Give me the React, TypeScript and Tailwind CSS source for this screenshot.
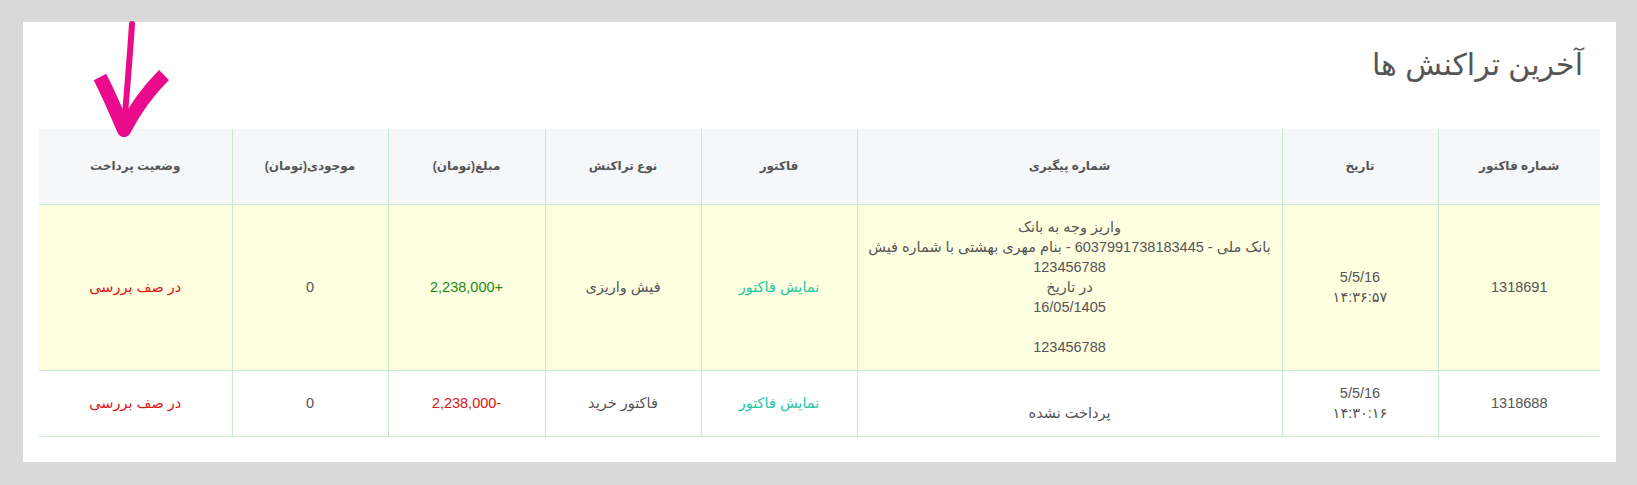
import React from 'react';

const font = { fontFamily: '"Liberation Sans", "DejaVu Sans", sans-serif' };

const headers = [
  { label: 'شماره فاکتور', w: 'w-[162px]' },
  { label: 'تاریخ', w: 'w-[156px]' },
  { label: 'شماره پیگیری', w: 'w-[425px]' },
  { label: 'فاکتور', w: 'w-[156px]' },
  { label: 'نوع تراکنش', w: 'w-[156px]' },
  { label: 'مبلغ(تومان)', w: 'w-[157px]' },
  { label: 'موجودی(تومان)', w: 'w-[156px]' },
  { label: 'وضعیت پرداخت', w: 'w-[193px]' },
];

const rows = [
  {
    id: '1318691',
    date: '5/5/16',
    time: '۱۴:۳۶:۵۷',
    tracking: [
      'واریز وجه به بانک',
      'بانک ملی - 6037991738183445 - بنام مهری بهشتی با شماره فیش',
      '123456788',
      'در تاریخ',
      '16/05/1405',
      '',
      '123456788',
    ],
    type: 'فیش واریزی',
    amount: '2,238,000+',
    positive: true,
    highlight: true,
  },
  {
    id: '1318688',
    date: '5/5/16',
    time: '۱۴:۳۰:۱۶',
    tracking: ['', 'پرداخت نشده'],
    type: 'فاکتور خرید',
    amount: '2,238,000-',
    positive: false,
    highlight: false,
  },
];

const cell = 'border-l border-[#c6ebd0] px-2 py-[12.5px] text-center align-middle';

// hand drawn annotation arrow over the table
const Arrow: React.FC = () => (
  <svg className="absolute left-[80px] top-[15px] pointer-events-none" width="110" height="125" viewBox="0 0 110 125">
    <path d="M52 9 C50 40 47 75 44 112" stroke="#ea0a8c" strokeWidth="6" fill="none" strokeLinecap="round" />
    <path d="M20 62 C28 78 36 96 44 115 C56 92 70 74 84 60" stroke="#ea0a8c" strokeWidth="14" fill="none" strokeLinecap="butt" strokeLinejoin="round" />
  </svg>
);

export default function App() {
  return (
    <div className="relative h-[485px] bg-[#d9d9d9] pt-[22px] pl-[23px] pr-[21px]" style={font}>
      <div className="h-[440px] bg-white px-4" dir="rtl">
        <div className="h-[107px] pt-[23px] pr-[17px]">
          <h2 className="text-[30px] leading-10 text-[#555]">آخرین تراکنش ها</h2>
        </div>
        <table className="w-[1561px] table-fixed border-collapse text-[14.5px] leading-5 text-[#555]">
          <thead>
            <tr className="h-[75px] bg-[#f5f7f9] border-b border-[#c6ebd0]">
              {headers.map((h, i) => (
                <th
                  key={h.label}
                  className={`${h.w} text-center align-middle text-[12px] font-bold text-[#555] ${i < headers.length - 1 ? 'border-l border-[#c6ebd0]' : ''}`}
                >
                  {h.label}
                </th>
              ))}
            </tr>
          </thead>
          <tbody>
            {rows.map((r) => (
              <tr key={r.id} className={`border-b border-[#c6ebd0] ${r.highlight ? 'bg-[#fefee0]' : 'bg-white'}`}>
                <td className={cell}>{r.id}</td>
                <td className={cell}>
                  <div>{r.date}</div>
                  <div>{r.time}</div>
                </td>
                <td className={cell}>
                  {r.tracking.map((t, i) => (
                    <div key={i} className="h-5 whitespace-nowrap">{t}</div>
                  ))}
                </td>
                <td className={cell}>
                  <span className="text-[#21c7a0]">نمایش فاکتور</span>
                </td>
                <td className={cell}>{r.type}</td>
                <td className={`${cell} ${r.positive ? 'text-[#1f8a16]' : 'text-[#e01414]'}`}>
                  <span dir="ltr">{r.amount}</span>
                </td>
                <td className={cell}>0</td>
                <td className="px-2 py-[12.5px] text-center align-middle text-[#e01414]">در صف بررسی</td>
              </tr>
            ))}
          </tbody>
        </table>
      </div>
      <Arrow />
    </div>
  );
}
